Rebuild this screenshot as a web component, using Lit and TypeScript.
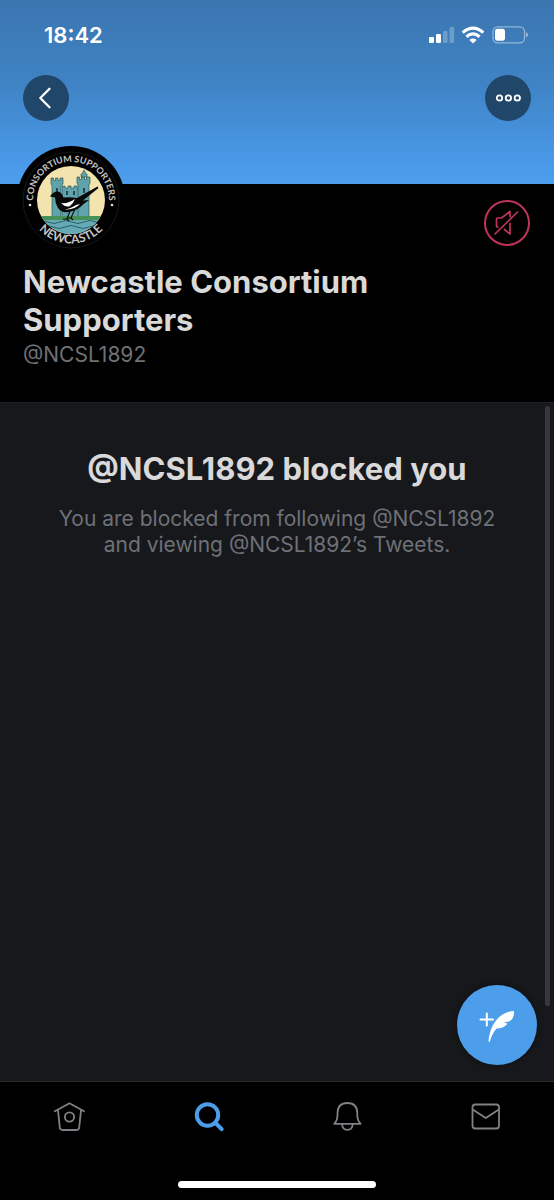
import { LitElement, html, css, svg } from "lit";
import { customElement } from "lit/decorators.js";

@customElement("status-bar")
class StatusBar extends LitElement {
  static styles = css`
    :host {
      display: flex;
      justify-content: space-between;
      align-items: center;
      height: 40px;
      padding: 15px 26px 20px 44px;
    }
    .time {
      font-size: 22px;
      line-height: 26px;
      font-weight: 600;
      color: #fff;
    }
    .signals {
      display: block;
    }
  `;
  render() {
    return html`
      <span class="time">18:42</span>
      <svg class="signals" width="100" height="20" viewBox="0 0 100 20" aria-label="Signal, Wi-Fi and battery">
        <g fill="#fff">
          <rect x="1" y="12" width="5" height="6" rx="1.3" />
          <rect x="8" y="9" width="5" height="9" rx="1.3" />
          <rect x="15" y="6" width="4.6" height="12" rx="1.3" opacity="0.25" />
          <rect x="21.5" y="2" width="4.6" height="16" rx="1.3" opacity="0.25" />
          <path d="M45 18.4 41.3 14.9Q45 12 48.7 14.9Z" />
        </g>
        <g fill="none" stroke="#fff" stroke-width="3.2">
          <path d="M34.7 7.6Q45 -1.400 55.3 7.6" />
          <path d="M38.4 11.8Q45 6 51.6 11.8" />
        </g>
        <rect x="65" y="1.8" width="31.5" height="16" rx="4.5" fill="none" stroke="#fff" stroke-opacity="0.45" stroke-width="1.3" />
        <rect x="67" y="3.8" width="10" height="12" rx="2.4" fill="#fff" />
        <path d="M98 7.2Q100 8 100 9.8T98 12.4Z" fill="#fff" opacity="0.5" />
      </svg>
    `;
  }
}

@customElement("club-crest")
class ClubCrest extends LitElement {
  static styles = css`
    :host {
      display: block;
      width: 108px;
      height: 108px;
    }
    .crest {
      display: block;
    }
    .lettering {
      font-family: Lato, sans-serif;
      font-size: 9px;
      font-weight: 700;
      fill: #c4c4c4;
    }
    .town {
      font-size: 12px;
    }
  `;
  render() {
    return html`
      <svg class="crest" width="108" height="108" viewBox="0 0 108 108" role="img" aria-label="Consortium Supporters Newcastle">
        <defs>
          <clipPath id="disc"><circle cx="54" cy="54" r="34" /></clipPath>
          <path id="upper" d="M17 62A37.9 37.9 0 1 1 91 62" />
          <path id="lower" d="M10.5 54A43.5 43.5 0 0 0 97.5 54" />
        </defs>
        <circle cx="54" cy="54" r="54" fill="#000" />
        <circle cx="54" cy="54" r="48" fill="none" stroke="#222" stroke-width="0.7" />
        <g clip-path="url(#disc)">
          <rect x="20" y="20" width="68" height="68" fill="#f3e3ae" />
          <g fill="#5fa3ac" stroke="#29474c" stroke-width="0.6">
            <path d="M45 40h3v2h3v-2h3v2h3v-2h3v2h3v-2h3v33H45Z" />
            <path d="M34 32h2.5v2.5h2V32h2.5v2.5h2V32H46v6l-2 2v33H35V40l-1-2v-6Z" />
            <path d="M60 31h2.5v2.500h2V31h3v2.500h2V31H73v6l-1 2v34H61V39l-1-2Z" />
            <path d="M64 31v-3h1l2-4 2 4h1v3Z" />
          </g>
          <g fill="#29474c">
            <rect x="39" y="42" width="2" height="5" />
            <rect x="66" y="42" width="2" height="5" />
            <rect x="49" y="45" width="2" height="4" />
            <rect x="56" y="45" width="2" height="4" />
          </g>
          <rect x="20" y="70" width="68" height="4.5" fill="#459157" />
          <rect x="20" y="74" width="68" height="15" fill="#66abb4" />
          <path
            d="M19 76q6-3 12 0t12 0 12 0 12 0 12 0 12 0M24 81q6-3 12 0t12 0 12 0 12 0 12 0"
            fill="none"
            stroke="#28616b"
            stroke-width="1"
          />
        </g>
        <path
          d="M33 50.500Q36 45.500 41 45.500Q45 46.500 46.500 51.500Q54 51 60 52L80.500 40.500 81.500 42 66 54.500 72 54 66 58.500Q61 64 54 65.500Q45 68 41 62Q38 57 38 51.500Z"
          fill="#090909"
        />
        <path d="M44 57q7 1 14-4-2 5-5 7-4 2-9-3Z" fill="#fff" />
        <path d="M45 63q7 1 14-4l4-1q-6 7-18 5Z" fill="#fff" />
        <path d="M53 65l-3 8h-4m4 0 2 2M58 63l-4 9h-3m3 0 2 2" fill="none" stroke="#101010" stroke-width="1.2" />
        ${svg`<text class="lettering" text-anchor="middle"><textPath href="#upper" startOffset="50%">CONSORTIUM SUPPORTERS</textPath></text>
        <text class="lettering town" text-anchor="middle"><textPath href="#lower" startOffset="50%">NEWCASTLE</textPath></text>`}
        <circle cx="13" cy="59" r="1.3" fill="#ddd" />
        <circle cx="95" cy="59" r="1.3" fill="#ddd" />
      </svg>
    `;
  }
}

@customElement("tab-bar")
class TabBar extends LitElement {
  static styles = css`
    :host {
      display: block;
      background: #000;
      border-top: 1px solid #2b2c31;
    }
    .tabs {
      display: grid;
      grid-template-columns: repeat(4, 1fr);
    }
    .tab {
      display: flex;
      justify-content: center;
      padding: 17px 0 19px;
      color: #808186;
    }
    .tab.active {
      color: #4c9eeb;
    }
    .icon {
      display: block;
      fill: none;
      stroke: currentColor;
      stroke-width: 1.8;
      stroke-linecap: round;
      stroke-linejoin: round;
    }
    .indicator {
      width: 198px;
      height: 7px;
      margin: 27px auto 12px;
      border-radius: 4px;
      background: #fff;
    }
  `;
  render() {
    return html`
      <nav class="tabs" aria-label="Main">
        <a class="tab" href="#home" aria-label="Home">
          <svg class="icon" width="36" height="36" viewBox="0 0 36 36">
            <path d="M3.800 12.200 18.500 4.300 33 12.200M7 11.300 8.800 28.500Q9 31 11.500 31H25.500Q28 31 28.200 28.500L30 11.300" />
            <circle cx="18.500" cy="18" r="4.600" />
          </svg>
        </a>
        <a class="tab active" href="#search" aria-label="Search" aria-current="page">
          <svg class="icon" width="36" height="36" viewBox="0 0 36 36">
            <g stroke-width="4">
              <circle cx="17.500" cy="16" r="10.700" />
              <path d="M25.500 24 31.700 30.200" />
            </g>
          </svg>
        </a>
        <a class="tab" href="#notifications" aria-label="Notifications">
          <svg class="icon" width="36" height="36" viewBox="0 0 36 36">
            <path d="M6.200 24.800H32.600Q29.300 21.500 29.300 16V14Q29 4 19.400 4T9.500 14V16Q9.500 21.500 6.200 24.800ZM14 25Q14.400 30.800 19.400 30.800T24.800 25" />
          </svg>
        </a>
        <a class="tab" href="#messages" aria-label="Messages">
          <svg class="icon" width="36" height="36" viewBox="0 0 36 36">
            <rect x="5.500" y="5.500" width="26.500" height="24" rx="2.700" />
            <path d="M6 10.800 18.800 19 31.500 10.800" />
          </svg>
        </a>
      </nav>
      <div class="indicator"></div>
    `;
  }
}

@customElement("app-root")
class AppRoot extends LitElement {
  static styles = css`
    :host {
      display: flex;
      flex-direction: column;
      min-height: 100vh;
      background: #000;
      color: #d9d9d9;
      font-family: Inter, "Liberation Sans", sans-serif;
    }
    .banner {
      background: linear-gradient(#3b76b0, #3f83c4 45%, #4a9aea 90%, #4c9eeb);
    }
    .actions {
      display: flex;
      justify-content: space-between;
      padding: 0 23px 63px;
    }
    .round {
      display: flex;
      align-items: center;
      justify-content: center;
      width: 46px;
      height: 46px;
      padding: 0;
      border: 0;
      border-radius: 50%;
      background: #20466a;
      color: #fff;
    }
    .round.mute {
      margin-top: 16px;
      border: 2px solid #bf3557;
      background: none;
      color: #bf3557;
    }
    .icon {
      display: block;
      fill: none;
      stroke: currentColor;
      stroke-linecap: round;
      stroke-linejoin: round;
    }
    .profile {
      padding-bottom: 34px;
    }
    .identity {
      display: flex;
      justify-content: space-between;
      align-items: flex-start;
      padding: 0 24px 0 17px;
    }
    .avatar {
      margin-top: -38px;
    }
    .name,
    .headline {
      margin: 0;
      font-size: 31px;
      line-height: 38px;
      font-weight: 700;
    }
    .name {
      padding: 9px 70px 0 23px;
    }
    .handle,
    .explanation {
      margin: 0;
      font-size: 21px;
      line-height: 26px;
      font-weight: 400;
      color: #6e7176;
    }
    .handle {
      padding: 3px 23px 0;
    }
    .timeline {
      position: relative;
      flex: 1;
      padding: 47px 52px;
      border-top: 1px solid #202125;
      background: #17181c;
      text-align: center;
    }
    .explanation {
      padding-top: 18px;
    }
    .scroll-thumb {
      position: absolute;
      top: 3px;
      right: 4px;
      bottom: 75px;
      width: 5px;
      border-radius: 3px;
      background: #37383c;
    }
    .compose {
      position: absolute;
      right: 17px;
      bottom: 16px;
      display: flex;
      align-items: center;
      justify-content: center;
      width: 80px;
      height: 80px;
      padding: 0;
      border: 0;
      border-radius: 50%;
      background: #4c9eeb;
      box-shadow: 0 0 6px #0006;
    }
  `;
  render() {
    return html`
      <header class="banner">
        <status-bar></status-bar>
        <div class="actions">
          <button class="round" aria-label="Back">
            <svg class="icon" width="24" height="24" viewBox="0 0 24 24">
              <path d="M15.500 2.800 6.300 12 15.500 21.200" stroke-width="2.300" />
            </svg>
          </button>
          <button class="round" aria-label="More">
            <svg class="icon" width="28" height="12" viewBox="0 0 28 12">
              <g stroke-width="1.800">
                <circle cx="5.500" cy="6" r="2.700" />
                <circle cx="14.400" cy="6" r="2.700" />
                <circle cx="23.300" cy="6" r="2.700" />
              </g>
            </svg>
          </button>
        </div>
      </header>
      <section class="profile">
        <div class="identity">
          <club-crest class="avatar"></club-crest>
          <button class="round mute" aria-label="Unmute">
            <svg class="icon" width="28" height="28" viewBox="0 0 28 28">
              <path d="M5 18H4.500Q3.500 18 3.500 17V10Q3.500 9 4.500 9H8.500L17 2.500V7.500M17 14.500V25L11.500 20.500M2 25 24.500 3" stroke-width="1.700" />
            </svg>
          </button>
        </div>
        <h1 class="name">Newcastle Consortium Supporters</h1>
        <p class="handle">@NCSL1892</p>
      </section>
      <main class="timeline">
        <h2 class="headline">@NCSL1892 blocked you</h2>
        <p class="explanation">You are blocked from following @NCSL1892 and viewing @NCSL1892’s Tweets.</p>
        <div class="scroll-thumb"></div>
        <button class="compose" aria-label="Compose Tweet">
          <svg width="40" height="40" viewBox="0 0 40 40">
            <path d="M9.800 8.500V20.500M3.500 14.500H16" stroke="#fff" stroke-width="2" stroke-linecap="round" />
            <path
              d="M11.500 36C12.500 28 14.500 21 19 15.500 23.500 10 29 6.500 37 6 37.300 10.500 36 14.500 32 16.500L26.500 17.800 30.500 18.500C28.500 21.500 25.500 23.300 19.500 23.600 16.500 27 14.500 31 12.900 36.300 12.400 37.200 11.400 37.200 11.500 36Z"
              fill="#fff"
            />
          </svg>
        </button>
      </main>
      <tab-bar></tab-bar>
    `;
  }
}
